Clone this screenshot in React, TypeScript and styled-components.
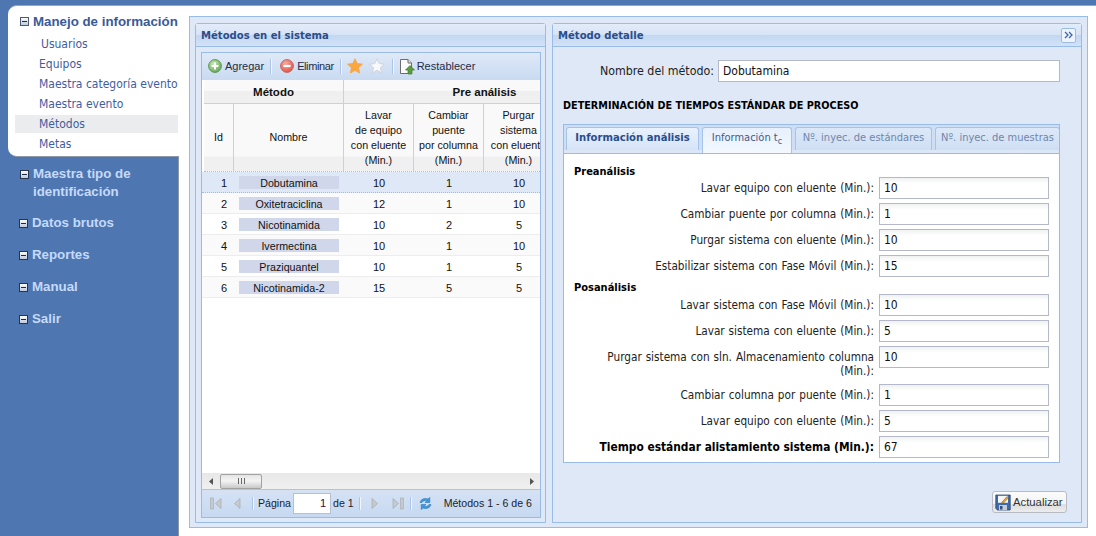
import React from "react";
import styled, { createGlobalStyle } from "styled-components";

const UI_FONT = `"DejaVu Sans Condensed", "Liberation Sans", sans-serif`;
const GRID_FONT = `"Liberation Sans", Arial, sans-serif`;

const GlobalStyle = createGlobalStyle`
  html, body { margin: 0; padding: 0; background: #fff; }
  * { box-sizing: border-box; }
`;

const subMenu = ["Equipos", "Maestra categoría evento", "Maestra evento", "Métodos", "Metas"];

const rows = [
  { id: 1, name: "Dobutamina", a: 10, b: 1, c: 10 },
  { id: 2, name: "Oxitetraciclina", a: 12, b: 1, c: 10 },
  { id: 3, name: "Nicotinamida", a: 10, b: 2, c: 5 },
  { id: 4, name: "Ivermectina", a: 10, b: 1, c: 10 },
  { id: 5, name: "Praziquantel", a: 10, b: 1, c: 5 },
  { id: 6, name: "Nicotinamida-2", a: 15, b: 5, c: 5 },
];

const preFields = [
  ["Lavar equipo con eluente (Min.):", "10"],
  ["Cambiar puente por columna (Min.):", "1"],
  ["Purgar sistema con eluente (Min.):", "10"],
  ["Estabilizar sistema con Fase Móvil (Min.):", "15"],
];

const posFields = [
  ["Lavar sistema con Fase Móvil (Min.):", "10"],
  ["Lavar sistema con eluente (Min.):", "5"],
  ["Purgar sistema con sln. Almacenamiento columna (Min.):", "10"],
  ["Cambiar columna por puente (Min.):", "1"],
  ["Lavar equipo con eluente (Min.):", "5"],
];

const Collapse = ({ x }: { x?: boolean }) => (
  <svg width="9" height="9" viewBox="0 0 9 9">
    <defs>
      <linearGradient id="col" x1="0" y1="0" x2="0" y2="1">
        <stop offset="0" stopColor="#ffffff" />
        <stop offset="1" stopColor="#b9c6d8" />
      </linearGradient>
    </defs>
    <rect x="0.5" y="0.5" width="8" height="8" fill="url(#col)" stroke={x ? "#26344e" : "#4a5a76"} />
    <rect x="2" y="4" width="5" height="1" fill="#1d2a44" />
  </svg>
);

const PlusIcon = () => (
  <svg width="14" height="14" viewBox="0 0 14 14">
    <defs>
      <radialGradient id="gr" cx="0.4" cy="0.35" r="0.75">
        <stop offset="0" stopColor="#cfeab8" />
        <stop offset="1" stopColor="#55a24a" />
      </radialGradient>
    </defs>
    <circle cx="7" cy="7" r="6.4" fill="url(#gr)" stroke="#5c9658" />
    <path d="M7 3.6v6.8M3.6 7h6.8" stroke="#fff" strokeWidth="2" />
  </svg>
);

const MinusIcon = () => (
  <svg width="14" height="14" viewBox="0 0 14 14">
    <defs>
      <radialGradient id="rd" cx="0.4" cy="0.3" r="0.8">
        <stop offset="0" stopColor="#f7aaa0" />
        <stop offset="1" stopColor="#dd4a3e" />
      </radialGradient>
    </defs>
    <circle cx="7" cy="7" r="6.4" fill="url(#rd)" stroke="#c2675f" />
    <path d="M3.4 7h7.2" stroke="#fff" strokeWidth="2.2" />
  </svg>
);

const Star = ({ on }: { on?: boolean }) => (
  <svg width="16" height="16" viewBox="0 0 16 16">
    <path
      d="M8 .8l2.2 4.8 5.2.6-3.9 3.5 1.1 5.2L8 12.3l-4.6 2.6 1.1-5.2L.6 6.2l5.2-.6z"
      fill={on ? "#fba73f" : "#f8f9fb"}
      stroke={on ? "#f5a84a" : "#cfd4dc"}
      strokeLinejoin="round"
    />
  </svg>
);

const DocIcon = () => (
  <svg width="16" height="17" viewBox="0 0 16 17">
    <path d="M1.5 1.5h7.5l3.5 3.5v10.5h-11z" fill="#fbfbfb" stroke="#6d6d6d" />
    <path d="M9 1.5V5h3.5" fill="#e2e2e2" stroke="#6d6d6d" />
    <path d="M11 7.5l4.5 4.5h-2.5v4h-4v-4H6.500z" fill="#5d9c3f" stroke="#3f7a2a" strokeWidth="0.7" />
  </svg>
);

const FloppyIcon = () => (
  <svg width="16" height="17" viewBox="0 0 16 17">
    <path d="M.8 1h14.400v15H2.500L.8 14.500z" fill="#3f6aa8" stroke="#2b4a7c" strokeWidth="0.8" />
    <rect x="3" y="1.800" width="10" height="7" fill="#f6f7f4" />
    <rect x="4" y="11" width="8" height="5" fill="#c6ccd6" />
    <rect x="5" y="12" width="2.500" height="3.500" fill="#33507e" />
    <path d="M7 8l5-5.500 1.500 1.300L8.500 9 6.600 9.500z" fill="#e5a63c" stroke="#7a5220" strokeWidth="0.5" />
  </svg>
);

const PageArrow = ({ dir, bar }: { dir: "l" | "r"; bar?: boolean }) => (
  <svg width={bar ? 12 : 8} height="13" viewBox={bar ? "0 0 12 13" : "0 0 8 13"}>
    {bar && <rect x={dir === "l" ? 0.5 : 8.5} y="1" width="3" height="11" fill="#c6c9ce" stroke="#a6aab0" strokeWidth="0.6" />}
    <path
      d={dir === "l" ? (bar ? "M11 1.500v10L5.500 6.500z" : "M7 1.500v10L1.500 6.500z") : "M1 1.500v10l5.500-5z"}
      fill="#c6c9ce"
      stroke="#a6aab0"
      strokeWidth="0.7"
    />
  </svg>
);

const RefreshIcon = () => (
  <svg width="15" height="15" viewBox="0 0 15 15">
    <path d="M2 6.500C2.800 3.200 6.500 1.500 10 3l1.800-1.600V6.500H7l1.700-1.700C6.800 4 5 4.800 4 6.500z" fill="#3d97dd" stroke="#1f6fb5" strokeWidth="0.5" />
    <path d="M13 8.500c-.8 3.300-4.500 5-8 3.500l-1.800 1.600V8.500H8l-1.700 1.700C8.200 11 10 10.200 11 8.500z" fill="#3d97dd" stroke="#1f6fb5" strokeWidth="0.5" />
  </svg>
);

export default function App() {
  return (
    <>
      <GlobalStyle />
      <Page>
        <Sidebar>
          <OpenGroup>
            <OpenTitle>
              <Collapse />
              Manejo de información
            </OpenTitle>
            <FirstItem>Usuarios</FirstItem>
            {subMenu.map((item) => (
              <MenuItem key={item} selected={item === "Métodos"}>
                {item}
              </MenuItem>
            ))}
          </OpenGroup>
          <ClosedList>
            <ClosedTitle first>
              <Collapse x />
              <span>
                Maestra tipo de
                <br />
                identificación
              </span>
            </ClosedTitle>
            {["Datos brutos", "Reportes", "Manual", "Salir"].map((t) => (
              <ClosedTitle key={t}>
                <Collapse x />
                <span>{t}</span>
              </ClosedTitle>
            ))}
          </ClosedList>
        </Sidebar>
        <Main>
          <Outer>
            <LeftPanel>
              <PanelHeader>
                <PanelTitle>Métodos en el sistema</PanelTitle>
              </PanelHeader>
              <LeftBody>
                <GridPanel>
                  <Toolbar>
                    <ToolButton>
                      <PlusIcon />
                      Agregar
                    </ToolButton>
                    <ToolSep l={6} r={9} />
                    <ToolButton tight>
                      <MinusIcon />
                      Eliminar
                    </ToolButton>
                    <ToolSep l={6} r={6} />
                    <StarGroup>
                      <Star on />
                      <Star />
                    </StarGroup>
                    <ToolSep l={7} r={6} />
                    <ToolButton narrow>
                      <DocIcon />
                      Restablecer
                    </ToolButton>
                  </Toolbar>
                  <TableClip>
                    <GroupHead>
                      <GroupCell width={140}>Método</GroupCell>
                      <GroupCell width={282}>Pre análisis</GroupCell>
                    </GroupHead>
                    <ColHead>
                      <HeadCell width={30}>Id</HeadCell>
                      <HeadCell width={110}>Nombre</HeadCell>
                      <HeadCell width={70}>
                        Lavar
                        <br />
                        de equipo
                        <br />
                        con eluente
                        <br />
                        (Min.)
                      </HeadCell>
                      <HeadCell width={70}>
                        Cambiar
                        <br />
                        puente
                        <br />
                        por columna
                        <br />
                        (Min.)
                      </HeadCell>
                      <HeadCell width={70}>
                        Purgar
                        <br />
                        sistema
                        <br />
                        con eluente
                        <br />
                        (Min.)
                      </HeadCell>
                    </ColHead>
                    {rows.map((r) => (
                      <Row key={r.id} selected={r.id === 1} even={r.id % 2 === 0}>
                        <IdCell width={30}>{r.id}</IdCell>
                        <Cell width={110}>
                          <NameChip>{r.name}</NameChip>
                        </Cell>
                        <Cell width={70}>{r.a}</Cell>
                        <Cell width={70}>{r.b}</Cell>
                        <Cell width={70}>{r.c}</Cell>
                      </Row>
                    ))}
                  </TableClip>
                  <HScroll>
                    <ScrollArrow>
                      <svg width="5" height="7" viewBox="0 0 5 7">
                        <path d="M4 0v7L0 3.500z" fill="#555" />
                      </svg>
                    </ScrollArrow>
                    <Thumb>
                      <Grip />
                    </Thumb>
                    <ScrollArrow right>
                      <svg width="5" height="7" viewBox="0 0 5 7">
                        <path d="M1 0v7l4-3.500z" fill="#555" />
                      </svg>
                    </ScrollArrow>
                  </HScroll>
                  <Paging>
                    <PageArrow dir="l" bar />
                    <PageGap w={11} />
                    <PageArrow dir="l" />
                    <PageSep l={11} r={5} />
                    <span>Página</span>
                    <PageInput value="1" readOnly />
                    <span>de 1</span>
                    <PageSep l={5} r={11} />
                    <PageArrow dir="r" />
                    <PageGap w={13} />
                    <PageArrow dir="r" bar />
                    <PageSep l={6} r={7} />
                    <RefreshIcon />
                    <PagingInfo>Métodos 1 - 6 de 6</PagingInfo>
                  </Paging>
                </GridPanel>
              </LeftBody>
            </LeftPanel>
            <RightPanel>
              <PanelHeader>
                <PanelTitle>Método detalle</PanelTitle>
                <CollapseBtn>
                  <svg width="9" height="8" viewBox="0 0 9 8">
                    <path d="M1 1l3 3-3 3M5 1l3 3-3 3" fill="none" stroke="#3a66ad" strokeWidth="1.300" />
                  </svg>
                </CollapseBtn>
              </PanelHeader>
              <RightBody>
                <NameRow>
                  <NameLabel>Nombre del método:</NameLabel>
                  <NameInput value="Dobutamina" readOnly />
                </NameRow>
                <SectionHeading>DETERMINACIÓN DE TIEMPOS ESTÁNDAR DE PROCESO</SectionHeading>
                <TabStrip>
                  <Tab width={133} kind="active">
                    Información análisis
                  </Tab>
                  <Tab width={90} kind="light">
                    Información t<sub>c</sub>
                  </Tab>
                  <Tab width={137} kind="off">
                    Nº. inyec. de estándares
                  </Tab>
                  <Tab width={125} kind="off">
                    Nº. inyec. de muestras
                  </Tab>
                </TabStrip>
                <TabBody>
                  <GroupLabel first>Preanálisis</GroupLabel>
                  {preFields.map(([label, value]) => (
                    <FormRow key={label}>
                      <FieldLabel>{label}</FieldLabel>
                      <FieldInput value={value} readOnly />
                    </FormRow>
                  ))}
                  <GroupLabel>Posanálisis</GroupLabel>
                  {posFields.map(([label, value]) => (
                    <FormRow key={label}>
                      <FieldLabel>{label}</FieldLabel>
                      <FieldInput value={value} readOnly />
                    </FormRow>
                  ))}
                  <FormRow>
                    <FieldLabel strong>Tiempo estándar alistamiento sistema (Min.):</FieldLabel>
                    <FieldInput value="67" readOnly />
                  </FormRow>
                </TabBody>
                <SaveButton>
                  <FloppyIcon />
                  Actualizar
                </SaveButton>
              </RightBody>
            </RightPanel>
          </Outer>
        </Main>
      </Page>
    </>
  );
}

const Page = styled.div`
  width: 1096px;
  height: 536px;
  padding-top: 5px;
  display: flex;
  background: #4e76b0;
  overflow: hidden;
  font-family: ${UI_FONT};
`;

const Sidebar = styled.aside`
  width: 179px;
  flex: none;
  border-right: 1px solid #8f98a6;
  padding-left: 8px;
`;

const OpenGroup = styled.div`
  height: 152px;
  margin-right: -1px;
  padding: 6px 1px 0 7px;
  background: #fff;
  border-top: 1px solid #9aa5b5;
  border-bottom: 1px solid #8f98a6;
  border-radius: 9px 0 0 9px;
  position: relative;
`;

const OpenTitle = styled.div`
  display: flex;
  align-items: center;
  gap: 4px;
  margin-left: 5px;
  margin-bottom: 4px;
  height: 18px;
  font-family: ${GRID_FONT};
  font-size: 13.3px;
  font-weight: 700;
  color: #3a5a98;
  white-space: nowrap;
`;

const MenuItem = styled.div<{ selected?: boolean }>`
  height: 20px;
  padding-left: 24px;
  line-height: 20px;
  font-size: 12px;
  color: #3f5d9f;
  white-space: nowrap;
  background: ${(p) => (p.selected ? "linear-gradient(transparent 1px, #ebecee 1px, #ebecee 19px, transparent 19px)" : "none")};
`;

const FirstItem = styled(MenuItem)`
  padding-left: 26px;
`;

const ClosedList = styled.div`
  padding: 8px 0 0 11px;
`;

const ClosedTitle = styled.div<{ first?: boolean }>`
  display: flex;
  align-items: flex-start;
  gap: 4px;
  margin-left: ${(p) => (p.first ? "1px" : "0")};
  margin-bottom: ${(p) => (p.first ? "13px" : "14px")};
  font-family: ${GRID_FONT};
  font-size: 13.3px;
  font-weight: 700;
  line-height: 18px;
  color: #c5dafa;
  white-space: nowrap;
  svg {
    margin-top: 5px;
    flex: none;
  }
`;

const Main = styled.main`
  flex: 1;
  min-width: 0;
  padding: 11px 8px 8px 10px;
  background: #fff;
  border-top: 1px solid #9aa5b5;
`;

const Outer = styled.div`
  height: 512px;
  margin-top: -1px;
  display: flex;
  gap: 6px;
  padding: 6px 5px 4px 5px;
  background: #dfe8f6;
  border: 1px solid #99bbe8;
`;

const PanelBase = styled.section`
  height: 100%;
  display: flex;
  flex-direction: column;
  border: 1px solid #99bbe8;
  border-radius: 3px 3px 0 0;
`;

const LeftPanel = styled(PanelBase)`
  width: 351px;
  flex: none;
`;

const RightPanel = styled(PanelBase)`
  width: 530px;
  flex: none;
`;

const PanelHeader = styled.header`
  height: 23px;
  flex: none;
  display: flex;
  align-items: center;
  justify-content: space-between;
  padding: 0 5px 0 5px;
  background: linear-gradient(#e2ecfa, #d7e4f6 48%, #c2d7f1 52%, #d3e2f6);
  border-bottom: 1px solid #99bbe8;
`;

const PanelTitle = styled.h2`
  margin: 0;
  font-family: ${UI_FONT};
  font-size: 11.2px;
  font-weight: 700;
  color: #2a4d8c;
`;

const CollapseBtn = styled.div`
  width: 15px;
  height: 15px;
  display: flex;
  align-items: center;
  justify-content: center;
  background: #eef4fc;
  border: 1px solid #9cbce6;
  border-radius: 2px;
`;

const LeftBody = styled.div`
  flex: 1;
  min-height: 0;
  padding: 5px 4px 4px 5px;
`;

const GridPanel = styled.div`
  height: 100%;
  display: flex;
  flex-direction: column;
  border: 1px solid #99bbe8;
  background: #fff;
`;

const Toolbar = styled.div`
  height: 27px;
  flex: none;
  display: flex;
  align-items: center;
  padding: 0 0 1px 6px;
  background: linear-gradient(#dfe9f7, #c9daf1);
  font-family: ${GRID_FONT};
  font-size: 11px;
  color: #1f2d46;
`;

const ToolButton = styled.div<{ tight?: boolean; narrow?: boolean }>`
  display: flex;
  align-items: center;
  gap: ${(p) => (p.narrow ? "2px" : "3px")};
  letter-spacing: ${(p) => (p.tight ? "-0.4px" : "0")};
  white-space: nowrap;
`;

const ToolSep = styled.div<{ l: number; r: number }>`
  width: 1px;
  height: 15px;
  margin: 0 ${(p) => p.r}px 0 ${(p) => p.l}px;
  background: #a9c5ea;
  box-shadow: 1px 0 0 #f0f6fe;
`;

const StarGroup = styled.div`
  display: flex;
  gap: 6px;
`;

const TableClip = styled.div`
  flex: 1;
  min-height: 0;
  overflow: hidden;
  padding-left: 2px;
  font-family: ${GRID_FONT};
  font-size: 10.7px;
  color: #111;
`;

const GroupHead = styled.div`
  display: flex;
  width: 450px;
  height: 24px;
  border-bottom: 1px solid #d0d0d0;
`;

const GroupCell = styled.div<{ width: number }>`
  width: ${(p) => p.width}px;
  flex: none;
  display: flex;
  align-items: center;
  justify-content: center;
  border-right: 1px solid #d0d0d0;
  background: linear-gradient(#f9f9f9, #f9f9f9 45%, #efefef 50%, #f0f0f0);
  font-size: 11.5px;
  font-weight: 700;
`;

const ColHead = styled.div`
  display: flex;
  width: 450px;
  height: 68px;
  border-bottom: 1px dotted #a3bae9;
`;

const HeadCell = styled.div<{ width: number }>`
  width: ${(p) => p.width}px;
  flex: none;
  display: flex;
  align-items: center;
  justify-content: center;
  text-align: center;
  line-height: 15px;
  white-space: nowrap;
  border-right: 1px solid #d0d0d0;
  background: linear-gradient(#f9f9f9, #f9f9f9 78%, #f0f0f0 79%, #f0f0f0);
`;

const Row = styled.div<{ selected?: boolean; even?: boolean }>`
  display: flex;
  width: 450px;
  height: 21px;
  margin-left: -2px;
  padding-left: 2px;
  border-bottom: ${(p) => (p.selected ? "1px dotted #a3bae9" : "1px solid #ededed")};
  background: ${(p) => (p.selected ? "#dfe8f6" : p.even ? "#fafafa" : "#fff")};
  font-size: 11px;
`;

const Cell = styled.div<{ width: number }>`
  width: ${(p) => p.width}px;
  flex: none;
  display: flex;
  align-items: center;
  justify-content: center;
  padding-top: 1px;
`;

const IdCell = styled(Cell)`
  padding-left: 10px;
`;

const NameChip = styled.div`
  width: 100px;
  height: 13px;
  margin-top: -1px;
  line-height: 14px;
  text-align: center;
  background: #d0d7ea;
  font-size: 10.7px;
  white-space: nowrap;
`;

const HScroll = styled.div`
  height: 16px;
  flex: none;
  display: flex;
  align-items: center;
  background: linear-gradient(#e8e8e8, #f0f0f0);
`;

const ScrollArrow = styled.div<{ right?: boolean }>`
  width: 18px;
  display: flex;
  justify-content: center;
  margin-left: ${(p) => (p.right ? "auto" : "0")};
`;

const Thumb = styled.div`
  width: 42px;
  height: 15px;
  display: flex;
  align-items: center;
  justify-content: center;
  background: linear-gradient(#e4e4e4, #f4f4f4 45%, #c9c9c9);
  border: 1px solid #a2a2a2;
  border-radius: 2px;
`;

const Grip = styled.div`
  width: 7px;
  height: 6px;
  background: repeating-linear-gradient(90deg, #666 0 1px, transparent 1px 3px);
`;

const Paging = styled.div`
  height: 28px;
  flex: none;
  display: flex;
  align-items: center;
  padding: 0 0 1px 8px;
  background: linear-gradient(#d5e2f4, #c6d9f1);
  border-top: 1px solid #a9c5ea;
  font-family: ${GRID_FONT};
  font-size: 10.6px;
  color: #1c1c2c;
  white-space: nowrap;
`;

const PageGap = styled.div<{ w: number }>`
  width: ${(p) => p.w}px;
`;

const PageSep = styled.div<{ l: number; r: number }>`
  width: 1px;
  height: 13px;
  margin: 0 ${(p) => p.r}px 0 ${(p) => p.l}px;
  background: #a9c5ea;
  box-shadow: 1px 0 0 #f0f6fe;
`;

const PageInput = styled.input`
  width: 38px;
  height: 21px;
  margin: 0 2px;
  padding: 0 4px;
  text-align: right;
  font-family: ${GRID_FONT};
  font-size: 11px;
  color: #2d0a4e;
  background: #fff;
  border: 1px solid #b6bfd0;
  outline: none;
`;

const PagingInfo = styled.span`
  margin-left: 11px;
`;

const RightBody = styled.div`
  flex: 1;
  min-height: 0;
  display: flex;
  flex-direction: column;
  padding: 13px 21px 9px 10px;
`;

const NameRow = styled.div`
  display: flex;
  align-items: center;
  justify-content: flex-end;
  gap: 4px;
`;

const NameLabel = styled.label`
  font-size: 12.3px;
  color: #222;
`;

const NameInput = styled.input`
  width: 342px;
  height: 22px;
  padding: 0 4px;
  font-family: ${UI_FONT};
  font-size: 12px;
  color: #111;
  background: #fff;
  border: 1px solid #b5b8c8;
  outline: none;
`;

const SectionHeading = styled.h3`
  margin: 17px 0 12px;
  height: 13px;
  flex: none;
  line-height: 13px;
  font-size: 10.75px;
  font-weight: 700;
  color: #000;
  white-space: nowrap;
`;

const TabStrip = styled.div`
  display: flex;
  gap: 3px;
  height: 29px;
  flex: none;
  padding: 2px 0 0 2px;
  overflow: hidden;
  background: #cedff5;
  border: 1px solid #99bbe8;
  border-bottom: none;
  box-shadow: inset 0 -3px 0 #dbe7f7;
`;

const Tab = styled.div<{ width: number; kind: "active" | "light" | "off" }>`
  width: ${(p) => p.width}px;
  flex: none;
  height: ${(p) => (p.kind === "light" ? "26px" : "23px")};
  line-height: 20px;
  text-align: center;
  white-space: nowrap;
  font-size: ${(p) => (p.kind === "active" ? "11.2px" : "11px")};
  font-weight: ${(p) => (p.kind === "active" ? 700 : 400)};
  color: ${(p) => (p.kind === "active" ? "#2a4d8c" : p.kind === "light" ? "#3c5a92" : "#7186aa")};
  background: ${(p) =>
    p.kind === "active"
      ? "linear-gradient(#e9f2fd, #d5e4f7)"
      : p.kind === "light"
        ? "linear-gradient(#e6f0fc, #f3f8fe)"
        : "linear-gradient(#dce8f8, #cfdff3)"};
  border: 1px solid #a6c3ea;
  border-bottom: none;
  border-radius: 3px 3px 0 0;
  sub {
    font-size: 9px;
    line-height: 0;
  }
`;

const TabBody = styled.div`
  height: 310px;
  flex: none;
  display: flex;
  flex-direction: column;
  padding: 11px 10px 0 10px;
  background: #fff;
  border: 1px solid #99bbe8;
`;

const GroupLabel = styled.div<{ first?: boolean }>`
  height: ${(p) => (p.first ? "12px" : "13px")};
  flex: none;
  line-height: 13px;
  font-size: 11px;
  font-weight: 700;
  color: #000;
`;

const FormRow = styled.div`
  display: flex;
  gap: 5px;
  align-items: flex-start;
  margin-bottom: 4px;
`;

const FieldLabel = styled.label<{ strong?: boolean }>`
  flex: 1;
  min-width: 0;
  padding: 4px 0 2px 20px;
  text-align: right;
  line-height: 14px;
  font-size: ${(p) => (p.strong ? "11.85px" : "11.7px")};
  word-spacing: ${(p) => (p.strong ? "0" : "0.6px")};
  font-weight: ${(p) => (p.strong ? 700 : 400)};
  color: ${(p) => (p.strong ? "#000" : "#222")};
`;

const FieldInput = styled.input`
  width: 170px;
  height: 22px;
  flex: none;
  padding: 0 4px;
  font-family: ${UI_FONT};
  font-size: 12px;
  color: #111;
  background: linear-gradient(#f0f2f2, #fff 6px);
  border: 1px solid #b5b8c8;
  outline: none;
`;

const SaveButton = styled.button`
  align-self: flex-end;
  width: 75px;
  height: 22px;
  flex: none;
  margin-top: auto;
  margin-right: -7px;
  padding: 0 2px;
  display: flex;
  align-items: center;
  gap: 2px;
  font-family: ${GRID_FONT};
  font-size: 11.3px;
  color: #333;
  background: linear-gradient(#fbfbfb, #f4f4f4 60%, #dedede 62%, #ececec);
  border: 1px solid #b9bcc4;
  border-radius: 3px;
`;
